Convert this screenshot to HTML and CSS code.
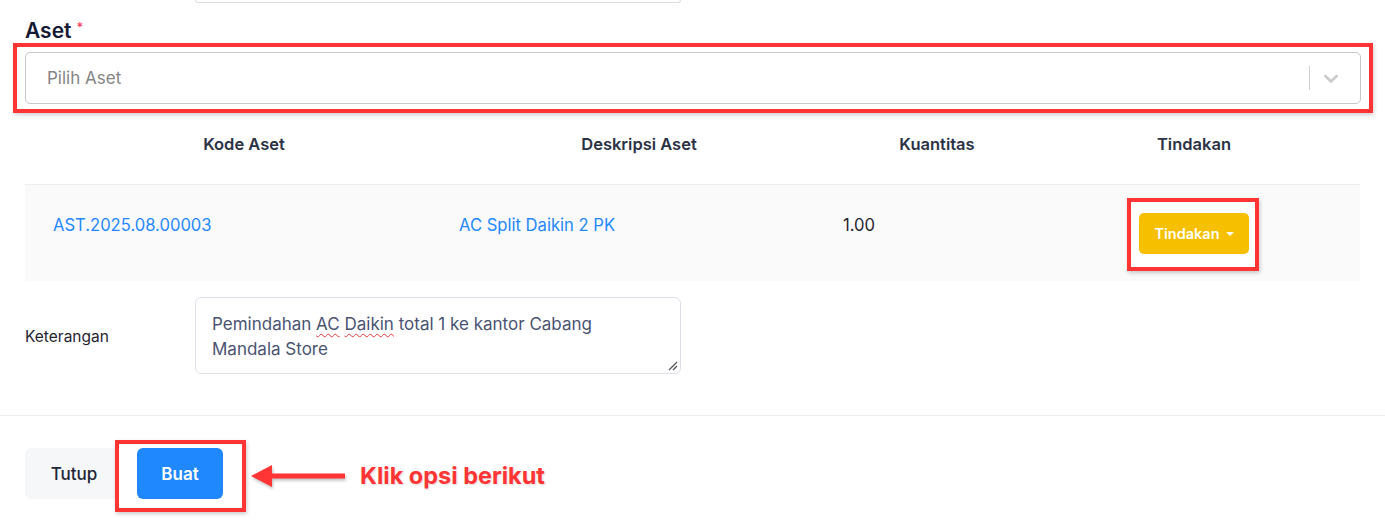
FILE: index.html
```html
<!DOCTYPE html>
<html lang="id">
<head>
<meta charset="utf-8">
<title>Aset</title>
<link rel="stylesheet" href="styles.css">
</head>
<body>
<div class="modal">
  <div class="modal-body">
    <div class="prev-row"><div class="prev-field"></div></div>

    <label class="field-label">Aset<span class="req">*</span></label>
    <div class="annot-box">
      <div class="select">
        <span class="placeholder">Pilih Aset</span>
        <div class="indicators">
          <span class="sep"></span>
          <svg class="chevron" width="24" height="24" viewBox="0 0 20 20" aria-hidden="true"><path d="M4.516 7.548c0.436-0.446 1.043-0.481 1.576 0l3.908 3.747 3.908-3.747c0.533-0.481 1.141-0.446 1.574 0 0.436 0.445 0.408 1.197 0 1.615-0.406 0.418-4.695 4.502-4.695 4.502-0.217 0.223-0.502 0.335-0.787 0.335s-0.57-0.112-0.789-0.335c0 0-4.287-4.084-4.695-4.502s-0.436-1.170 0-1.615z"/></svg>
        </div>
      </div>
    </div>

    <div class="table">
      <div class="thead">
        <div class="th">Kode Aset</div>
        <div class="th">Deskripsi Aset</div>
        <div class="th">Kuantitas</div>
        <div class="th">Tindakan</div>
      </div>
      <div class="trow">
        <div class="td"><a class="link" href="#">AST.2025.08.00003</a></div>
        <div class="td"><a class="link" href="#">AC Split Daikin 2 PK</a></div>
        <div class="td">1.00</div>
        <div class="td">
          <span class="annot annot-action"><button class="btn-action" type="button">Tindakan<span class="caret"></span></button></span>
        </div>
      </div>
    </div>

    <div class="form-row">
      <span class="row-label">Keterangan</span>
      <div class="textarea">Pemindahan <span class="spell">AC</span> <span class="spell">Daikin</span> total 1 ke kantor Cabang Mandala Store<svg class="grip" width="10" height="10" viewBox="0 0 10 10" aria-hidden="true"><path d="M9 1L1 9M9 5L5 9" stroke="#555" stroke-width="1.3" fill="none"/></svg></div>
    </div>
  </div>

  <div class="modal-footer">
    <button class="btn-close" type="button">Tutup</button>
    <span class="annot annot-submit"><button class="btn-submit" type="button">Buat</button></span>
    <svg class="arrow" width="96" height="24" viewBox="0 0 96 24" aria-hidden="true"><path d="M0 12L21 1V9.5H94V14.5H21V23Z" fill="#ff3535"/></svg>
    <span class="hint">Klik opsi berikut</span>
  </div>
</div>
</body>
</html>
```

FILE: styles.css
```css
* { box-sizing: border-box; }

html, body {
  margin: 0;
  padding: 0;
  background: #fff;
  font-family: Inter, "Noto Sans", "Liberation Sans", sans-serif;
  color: #212636;
}

.modal { width: 1385px; }

.modal-body {
  padding: 0 25px 41px;
}

.prev-row {
  padding-left: 170px;
}
.prev-field {
  width: 486px;
  height: 3px;
  border: 1px solid #dcdde3;
  border-top: none;
  border-radius: 0 0 6px 6px;
}

.field-label {
  display: block;
  margin: 16px 0 0;
  font-size: 21px;
  line-height: 24px;
  font-weight: 600;
  color: #141a33;
}
.req {
  color: #ff3d5e;
  font-size: 13px;
  font-weight: 500;
  vertical-align: top;
  margin-left: 5px;
  position: relative;
  top: -4px;
}

.annot-box {
  margin: 0 -13px 0 -12px;
  border: 4px solid #ff3535;
  padding: 5px 8px;
  box-shadow: 1px 2px 4px rgba(0,0,0,0.18);
}

.select {
  height: 52px;
  border: 1px solid #c7c7c7;
  border-radius: 5px;
  display: flex;
  align-items: center;
  padding-left: 21px;
}
.placeholder {
  flex: 1;
  font-size: 17px;
  color: #858585;
}
.indicators {
  display: flex;
  align-items: center;
  height: 100%;
}
.sep {
  width: 1px;
  height: 24px;
  background: #cfcfcf;
}
.chevron {
  margin: 0 17px 0 9px;
  fill: #cccccc;
}

/* table */
.thead {
  display: grid;
  grid-template-columns: 438px 352px 244px 270px;
  height: 72px;
  border-bottom: 1px solid #efefef;
}
.th {
  padding-top: 20px;
  text-align: center;
  font-size: 16.5px;
  line-height: 22px;
  font-weight: 600;
  color: #2b3245;
}
.trow {
  display: grid;
  grid-template-columns: 406px 384px 296px 249px;
  background: #fafafa;
  height: 96px;
}
.td {
  padding: 28px 0 0 28px;
  font-size: 16.6px;
  line-height: 24px;
  color: #1f2330;
}
.link {
  color: #2488ff;
  text-decoration: none;
}

.annot {
  position: relative;
  display: inline-block;
}
.annot::before {
  content: "";
  position: absolute;
  border: 4px solid #ff3535;
  background: #fff;
  box-shadow: 1px 2px 4px rgba(0,0,0,0.2);
}
.annot > button { position: relative; }

.annot-action::before { top: -15px; left: -12px; right: -10px; bottom: -17px; }

.btn-action {
  display: flex;
  align-items: center;
  height: 41px;
  width: 110px;
  justify-content: center;
  border: none;
  border-radius: 5px;
  background: #f6c000;
  color: #fff;
  font-family: inherit;
  font-size: 14.5px;
  font-weight: 600;
  padding: 0;
}
.caret {
  display: inline-block;
  margin-left: 6px;
  border-left: 4px solid transparent;
  border-right: 4px solid transparent;
  border-top: 4px solid #fff;
}

/* notes row */
.form-row {
  display: grid;
  grid-template-columns: 170px 486px;
  align-items: center;
  margin-top: 16px;
}
.row-label {
  font-size: 15.5px;
  color: #1f2330;
  position: relative;
  top: 1px;
}
.textarea {
  position: relative;
  height: 77px;
  border: 1px solid #dde0e8;
  border-radius: 6px;
  padding: 14px 24px 14px 16px;
  font-size: 17px;
  line-height: 25px;
  color: #4a5372;
}
.spell {
  text-decoration: underline wavy #e53935;
  text-decoration-thickness: 1px;
  text-underline-offset: 3px;
}
.grip {
  position: absolute;
  right: 2px;
  bottom: 2px;
}

/* footer */
.modal-footer {
  border-top: 1px solid #ececec;
  padding: 32px 25px 26px;
  display: flex;
  align-items: center;
}
.btn-close {
  width: 98px;
  height: 51px;
  border: none;
  border-radius: 6px;
  background: #f6f7f9;
  color: #212636;
  font-family: inherit;
  font-size: 17px;
  font-weight: 500;
  margin-right: 14px;
}
.annot-submit::before { top: -8px; left: -22px; right: -23px; bottom: -13px; }
.btn-submit {
  display: block;
  width: 86px;
  height: 51px;
  border: none;
  border-radius: 6px;
  background: #1f88ff;
  color: #fff;
  font-family: inherit;
  font-size: 17px;
  font-weight: 600;
}
.arrow {
  margin-left: 28px;
  position: relative;
  top: 2px;
  filter: drop-shadow(1px 2px 1.5px rgba(0,0,0,0.25));
}
.hint {
  margin-left: 13px;
  font-size: 23.5px;
  font-weight: 700;
  color: #ff3535;
  position: relative;
  top: 2px;
  text-shadow: 1px 1px 2px rgba(0,0,0,0.15);
}
```
